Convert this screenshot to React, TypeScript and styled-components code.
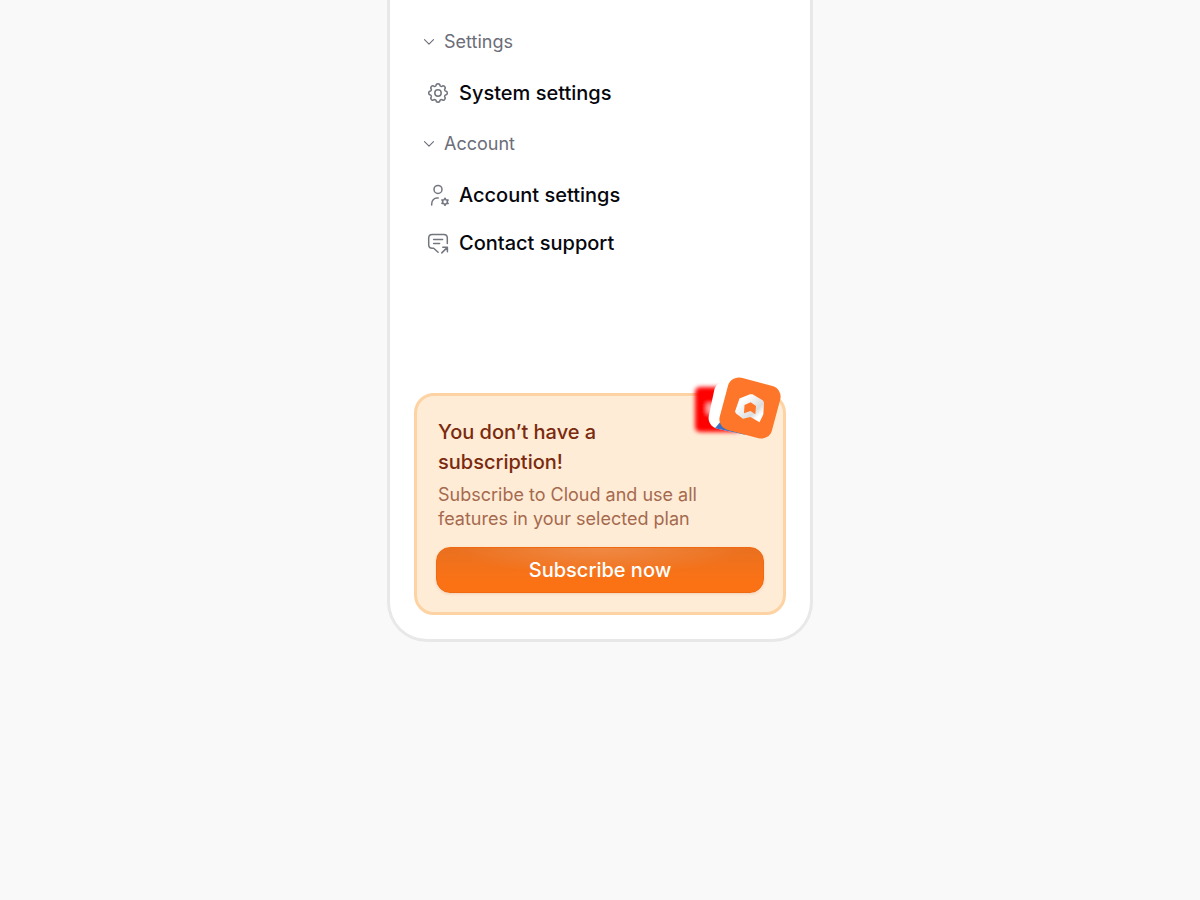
import type { ReactNode } from "react";
import styled, { createGlobalStyle } from "styled-components";

const App = () => {
  return (
    <>
      <GlobalStyle />
      <Page>
        <Sidebar>
          <nav>
            <Section title="Settings">
              <Item icon={<GearIcon />} label="System settings" />
            </Section>
            <Section title="Account">
              <Item icon={<UserGearIcon />} label="Account settings" />
              <Item icon={<SupportIcon />} label="Contact support" />
            </Section>
          </nav>
          <PromoCard>
            <TileStack />
            <PromoTitle>You don’t have a subscription!</PromoTitle>
            <PromoText>
              Subscribe to Cloud and use all features in your selected plan
            </PromoText>
            <SubscribeButton type="button">Subscribe now</SubscribeButton>
          </PromoCard>
        </Sidebar>
      </Page>
    </>
  );
};

export default App;

const Section = ({
  title,
  children,
}: {
  title: string;
  children: ReactNode;
}) => {
  return (
    <section>
      <SectionToggle type="button" aria-expanded="true">
        <svg width="12" height="12" viewBox="0 0 12 12" aria-hidden="true">
          <path
            d="M1.5 3.7 6 8.2l4.5-4.5"
            fill="none"
            stroke="currentColor"
            strokeWidth="1.1"
            strokeLinecap="round"
            strokeLinejoin="round"
          />
        </svg>
        {title}
      </SectionToggle>
      <ItemList>{children}</ItemList>
    </section>
  );
};

const Item = ({ icon, label }: { icon: ReactNode; label: string }) => {
  return (
    <li>
      <ItemLink href="#">
        {icon}
        {label}
      </ItemLink>
    </li>
  );
};

// eight rounded teeth around a 22px box
const gearPath = () => {
  const at = (radius: number, degrees: number) => {
    const a = (degrees * Math.PI) / 180;
    const x = 11 + radius * Math.cos(a);
    const y = 11 + radius * Math.sin(a);
    return `${x.toFixed(2)} ${y.toFixed(2)}`;
  };
  let d = `M${at(7.6, -15)}`;
  for (let i = 0; i < 8; i++) {
    const t = i * 45;
    d += `C${at(9, t - 13)} ${at(9.3, t - 8)} ${at(9.3, t)}`;
    d += `C${at(9.3, t + 8)} ${at(9, t + 13)} ${at(7.6, t + 15)}`;
    d += `Q${at(7.1, t + 22.5)} ${at(7.6, t + 30)}`;
  }
  return `${d}Z`;
};

const GearIcon = () => (
  <Icon viewBox="0 0 22 22" aria-hidden="true">
    <path d={gearPath()} />
    <circle cx="11" cy="11" r="3.2" />
  </Icon>
);

const UserGearIcon = () => (
  <Icon viewBox="0 0 22 22" aria-hidden="true">
    <circle cx="11" cy="5.4" r="4" />
    <path d="M4.7 21v-1.3c0-3.1 2.3-5.6 5.3-5.6h1.2" />
    <path d="m18 14.2 1 1.800h2.100L20.100 17.800l1 1.800H19l-1 1.800-1-1.800h-2.100l1-1.800-1-1.800H17Z" />
  </Icon>
);

const SupportIcon = () => (
  <Icon viewBox="0 0 22 22" aria-hidden="true">
    <path d="M20.3 11.400V6c0-2-1.500-3.500-3.500-3.500H5.200c-2 0-3.500 1.500-3.500 3.500v6.700c0 2 1.500 3.500 3.500 3.500h1.500l4.400 4.100" />
    <path d="M6.6 7.500h9M6.600 11.400h6" />
    <path d="m14.8 20.900 5.500-5.500M15.800 15.200h4.600v4.600" />
  </Icon>
);

const TileStack = () => (
  <Tiles viewBox="0 0 100 76" aria-hidden="true">
    <defs>
      <filter id="blurFar" x="-20%" y="-20%" width="140%" height="140%">
        <feGaussianBlur stdDeviation="2" />
      </filter>
      <filter id="blurNear" x="-20%" y="-20%" width="140%" height="140%">
        <feGaussianBlur stdDeviation="0.7" />
      </filter>
      <linearGradient id="mark" x1="0" y1="0" x2="1" y2="1">
        <stop offset="0.25" stopColor="#fff" />
        <stop offset="0.65" stopColor="#dcdcdc" />
        <stop offset="0.8" stopColor="#fff" />
      </linearGradient>
      <clipPath id="nearTile">
        <rect
          x="21"
          y="14"
          width="48"
          height="48"
          rx="11"
          transform="rotate(12 45 38)"
        />
      </clipPath>
    </defs>
    <g filter="url(#blurFar)">
      <rect x="5" y="17" width="46" height="45" rx="5" fill="#ff0000" />
      <path d="M17 34h12v9H17Z" fill="#fff" opacity="0.7" />
    </g>
    <g filter="url(#blurNear)">
      <g clipPath="url(#nearTile)">
        <path d="M10 0h80v76H10Z" fill="#fff" />
        <path d="M20 64 32 50l32 2 6 24H24Z" fill="#3b6fc4" />
      </g>
    </g>
    <rect
      x="33"
      y="11"
      width="54"
      height="54"
      rx="11"
      fill="#fd7629"
      transform="rotate(15 60 38)"
    />
    <path
      d="M49.500 28.600 60 24.300 62.500 24.300 73 30.500 74 32.500 73.300 44.500 69.500 52.300 60.500 47 53 48.700 46 43.500 45 41.500Z M54.500 35 60.700 32.300 66 36 65.300 44.200 60.500 41 54 43.300Z"
      fill="url(#mark)"
      fillRule="evenodd"
    />
  </Tiles>
);

const GlobalStyle = createGlobalStyle`
  * {
    box-sizing: border-box;
  }
  body {
    margin: 0;
    background: #f9f9f9;
    font-family: Inter, "Liberation Sans", sans-serif;
  }
  button {
    font-family: inherit;
  }
`;

const Page = styled.main`
  display: flex;
  justify-content: center;
  align-items: flex-start;
`;

const Sidebar = styled.aside`
  display: flex;
  flex-direction: column;
  gap: 126px;
  width: 100%;
  max-width: 426px;
  padding: 15px 24px 24px;
  background: #fff;
  border: 3px solid #e8e8e8;
  border-top: 0;
  border-radius: 0 0 40px 40px;
`;

const SectionToggle = styled.button`
  display: flex;
  align-items: center;
  gap: 9px;
  width: 100%;
  height: 54px;
  padding: 0 9px 1px;
  border: 0;
  background: none;
  color: #6b6d78;
  font-size: 18px;
  font-weight: 400;
  cursor: pointer;
`;

const ItemList = styled.ul`
  margin: 0;
  padding: 0;
  list-style: none;
`;

const ItemLink = styled.a`
  display: flex;
  align-items: center;
  gap: 10px;
  height: 48px;
  padding: 0 13px;
  color: #06070d;
  font-size: 20px;
  font-weight: 500;
  text-decoration: none;
`;

const Icon = styled.svg`
  width: 22px;
  height: 22px;
  fill: none;
  stroke: #74767f;
  stroke-width: 1.5;
  stroke-linecap: round;
  stroke-linejoin: round;
`;

const PromoCard = styled.section`
  position: relative;
  padding: 21px 19px 19px;
  background: #ffecd6;
  border: 3px solid #fdd3a3;
  border-radius: 20px;
`;

const Tiles = styled.svg`
  position: absolute;
  top: -26px;
  right: -7px;
  width: 100px;
  height: 76px;
`;

const PromoTitle = styled.h2`
  max-width: 220px;
  margin: 0 0 6px;
  padding: 0 2px;
  color: #7a2a0e;
  font-size: 20px;
  font-weight: 500;
  line-height: 30px;
`;

const PromoText = styled.p`
  max-width: 280px;
  margin: 0 0 16px;
  padding: 0 2px;
  color: #a56a4e;
  font-size: 18px;
  line-height: 24px;
`;

const SubscribeButton = styled.button`
  width: 100%;
  height: 46px;
  border: 1px solid #ef6a12;
  border-radius: 14px;
  background:
    radial-gradient(ellipse 45% 60% at 50% 0, #f08a45, transparent),
    linear-gradient(#e97020, #fb7215 75%);
  box-shadow: 0 1px 3px rgba(154, 52, 18, 0.15);
  color: #fff;
  font-size: 20px;
  font-weight: 500;
  cursor: pointer;
`;
